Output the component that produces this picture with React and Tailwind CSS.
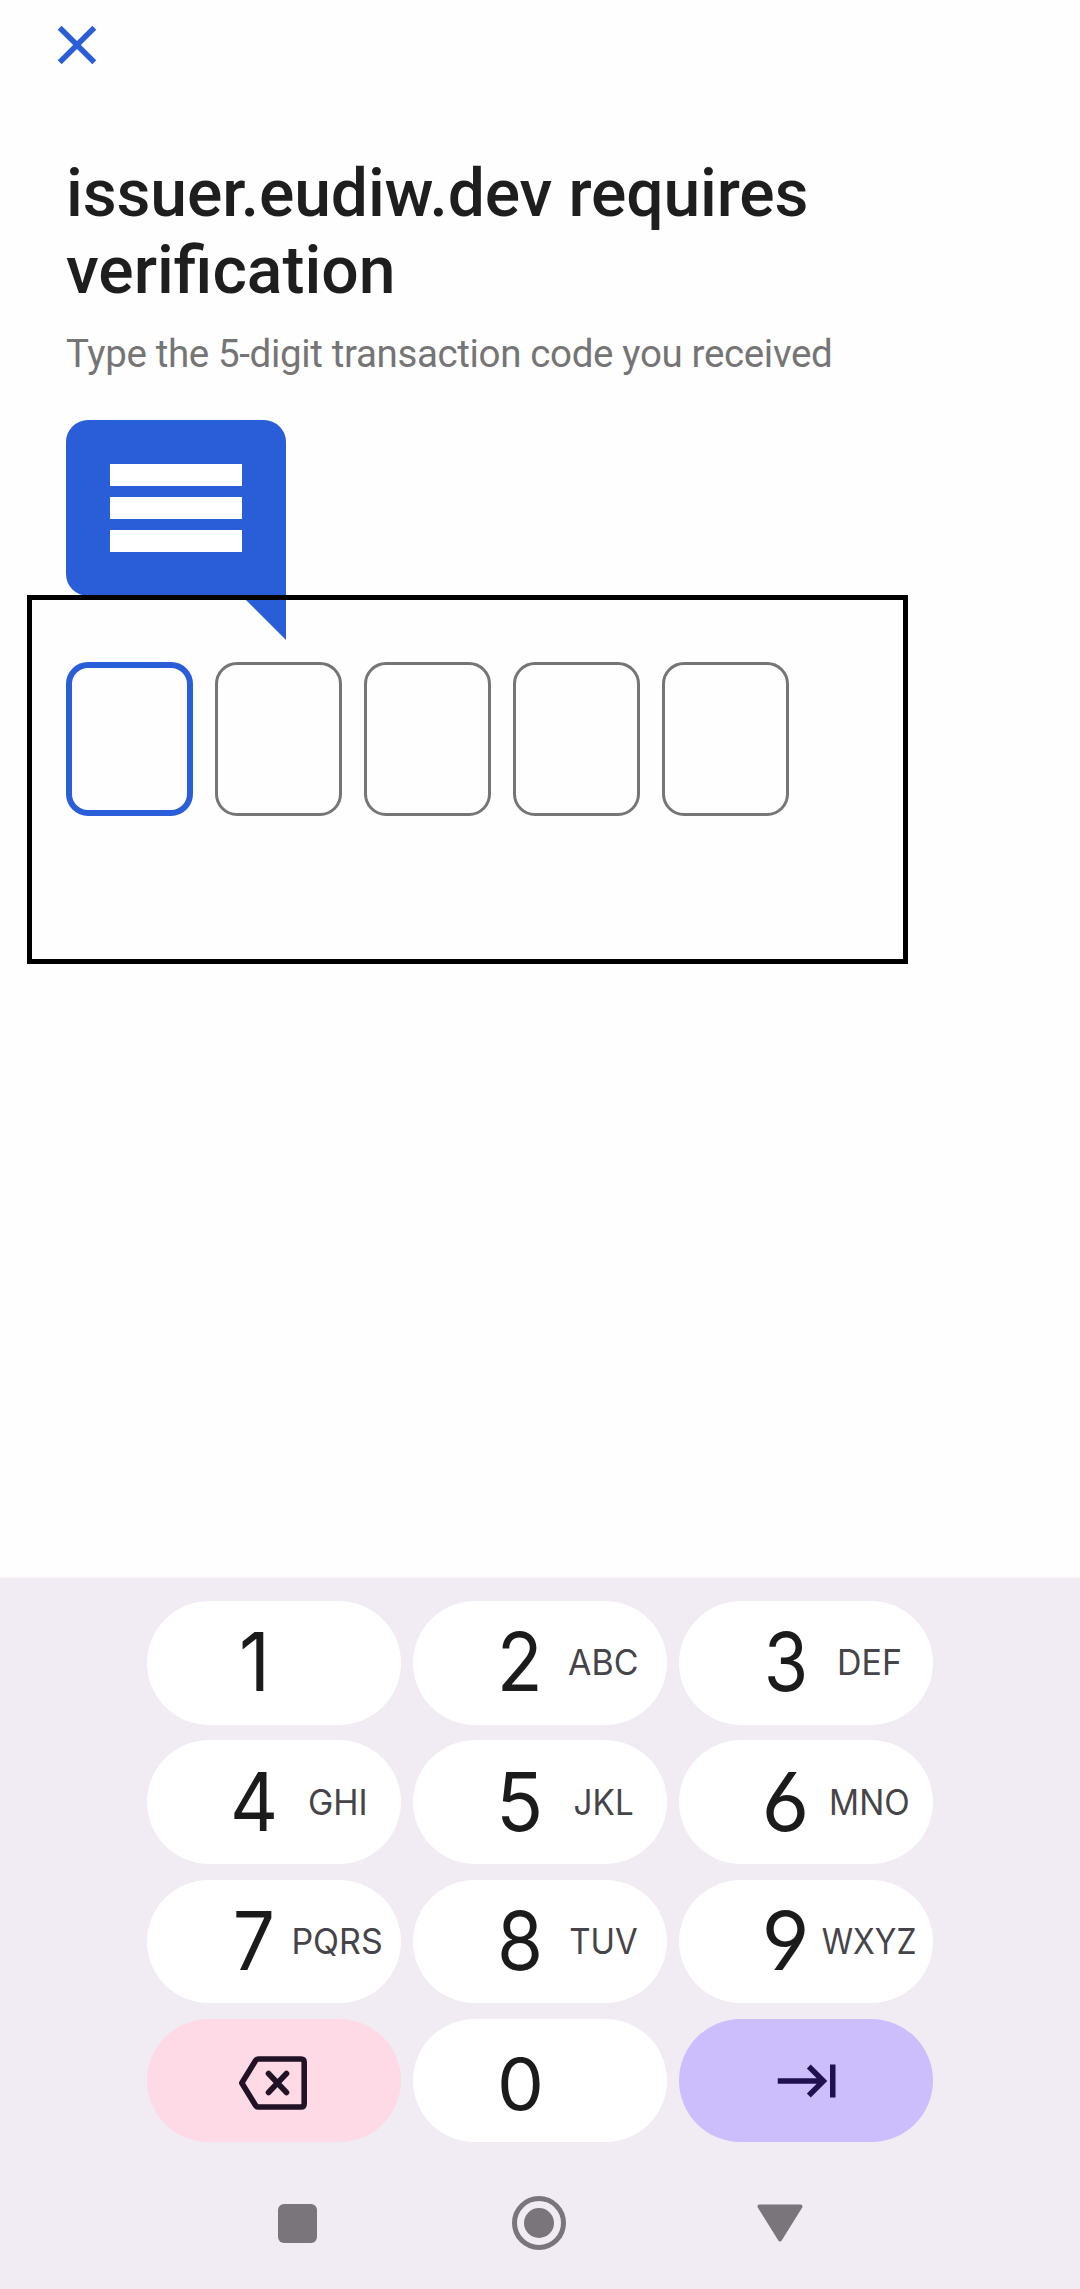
import React from "react";

const KEYS = [
  { digit: "1", digitFit: "scale-x-[0.94]" },
  { digit: "2", digitFit: "scale-x-[0.93]", letters: "ABC", lettersFit: "scale-x-[0.97]" },
  { digit: "3", digitFit: "scale-x-[0.89]", letters: "DEF", lettersFit: "scale-x-[0.97]" },
  { digit: "4", digitFit: "scale-x-[0.92]", letters: "GHI", lettersFit: "scale-x-[0.97]" },
  { digit: "5", digitFit: "scale-x-[0.96]", letters: "JKL", lettersFit: "scale-x-[0.95]" },
  { digit: "6", digitFit: "scale-x-[1.02]", letters: "MNO", lettersFit: "scale-x-[0.95]" },
  { digit: "7", digitFit: "scale-x-[0.92]", letters: "PQRS", lettersFit: "scale-x-[0.97]" },
  { digit: "8", digitFit: "scale-x-[0.92]", letters: "TUV", lettersFit: "scale-x-[0.94]" },
  { digit: "9", digitFit: "scale-x-[1.02]", letters: "WXYZ", lettersFit: "scale-x-[0.91]" },
];

function CloseIcon() {
  return (
    <svg viewBox="0 0 24 24" className="size-[66px] fill-[#2a5ed9]">
      <path d="M19 6.41L17.59 5 12 10.59 6.41 5 5 6.41 10.59 12 5 17.59 6.41 19 12 13.41 17.59 19 19 17.59 13.41 12z" />
    </svg>
  );
}

function MessageIcon() {
  return (
    <svg viewBox="0 0 220 220" className="size-[220px]">
      <path fill="#2a5ed9" d="M22 0H198A22 22 0 0 1 220 22V220L176 176H22A22 22 0 0 1 0 154V22A22 22 0 0 1 22 0Z" />
      <path fill="#fff" d="M44 44H176V66H44ZM44 77H176V99H44ZM44 110H176V132H44Z" />
    </svg>
  );
}

function Key({ digit, digitFit, letters, lettersFit }) {
  return (
    <button className="flex h-[123.5px] items-center rounded-full bg-white pl-[74px]">
      <span className="flex w-[66px] justify-center">
        <span className={`block text-[81px] leading-none text-[#1b1b1c] [font-feature-settings:'cv03','cv04'] ${digitFit}`}>
          {digit}
        </span>
      </span>
      {letters && (
        <span className="flex w-[101px] justify-center">
          <span className={`block text-[35px] leading-none text-[#454448] ${lettersFit}`}>{letters}</span>
        </span>
      )}
    </button>
  );
}

export default function App() {
  return (
    <div className="flex h-[2289px] w-[1080px] flex-col overflow-hidden bg-[#fefefe] font-['Roboto',sans-serif]">
      <header className="pt-3 pl-11">
        <button aria-label="Close" className="block">
          <CloseIcon />
        </button>
      </header>

      <main className="relative flex-1 px-[66px] pt-[77px]">
        <h1 className="w-[860px] text-[66px] leading-[77px] font-medium text-[#1e1e1e]">
          <span className="tracking-[-0.13px]">issuer.eudiw.dev requires </span>
          verification
        </h1>
        <p className="mt-[17px] text-[38.5px] leading-[55px] tracking-[-0.35px] text-[#757575]">
          Type the 5-digit transaction code you received
        </p>
        <div className="mt-[39px]">
          <MessageIcon />
        </div>
        <div className="mt-[22px] flex gap-[22px]">
          <div className="h-[154px] w-[127px] rounded-[22px] border-6 border-[#2a5ed9]" />
          {[1, 2, 3, 4].map((i) => (
            <div key={i} className="h-[154px] w-[127px] rounded-[22px] border-3 border-[#757575]" />
          ))}
        </div>
        {/* Highlight frame around the code fields */}
        <div className="absolute top-[517px] left-[27px] h-[369px] w-[881px] border-5 border-black" />
      </main>

      <section className="flex h-[711px] flex-col bg-[#f1ebf3] pt-[23px] font-['Inter',sans-serif] shadow-[0_0_4px_#f1ebf3]">
        <div className="ml-[147px] grid w-[786px] grid-cols-3 gap-x-3 gap-y-[15.8px]">
          {KEYS.map((item) => (
            <Key key={item.digit} {...item} />
          ))}
          <button aria-label="Backspace" className="flex h-[123.5px] items-center justify-center rounded-full bg-[#fed9e6]">
            <svg viewBox="0 0 70 56" className="mt-[5px] mr-[3px] h-[56px] w-[70px] fill-none stroke-[#211226]">
              <path strokeWidth="5.6" strokeLinejoin="round" d="M20.5 4H63Q66.200 4 66.200 7.200V48.800Q66.200 52 63 52H20.500Q18.500 52 17.300 50L3.800 28L17.300 6Q18.500 4 20.500 4Z" />
              <path strokeWidth="5.600" strokeLinecap="round" d="M30.500 18.500L48.500 37.500M48.500 18.500L30.500 37.500" />
            </svg>
          </button>
          <button className="flex h-[123.5px] items-center rounded-full bg-white pl-[74px]">
            <span className="flex w-[66px] justify-center">
              <span className="mt-[8px] block scale-x-[1.05] text-[71px] leading-none text-[#1b1b1c]">0</span>
            </span>
          </button>
          <button aria-label="Next" className="flex h-[123.5px] items-center justify-center rounded-full bg-[#ccbdfc] pl-[3px]">
            <svg viewBox="0 0 24 24" className="size-[66px] fill-[#21104f]">
              <path d="M11.590 7.410L15.170 11H1v2h14.170l-3.590 3.590L13 18l6-6-6-6-1.410 1.410zM20 6v12h2V6h-2z" />
            </svg>
          </button>
        </div>

        <nav className="mt-[54px] ml-[278px] flex h-[54px] items-center">
          <div className="size-[39px] rounded-[6px] bg-[#79757a]" />
          <div className="mr-[191px] ml-[195px] flex size-[54px] items-center justify-center rounded-full border-5 border-[#79757a]">
            <div className="size-[30px] rounded-full bg-[#79757a]" />
          </div>
          <svg viewBox="0 0 46 38" className="h-[38px] w-[46px] fill-[#79757a] stroke-[#79757a]">
            <path strokeWidth="4" strokeLinejoin="round" d="M2.500 2.500H43.500L23 35.500Z" />
          </svg>
        </nav>
      </section>
    </div>
  );
}
